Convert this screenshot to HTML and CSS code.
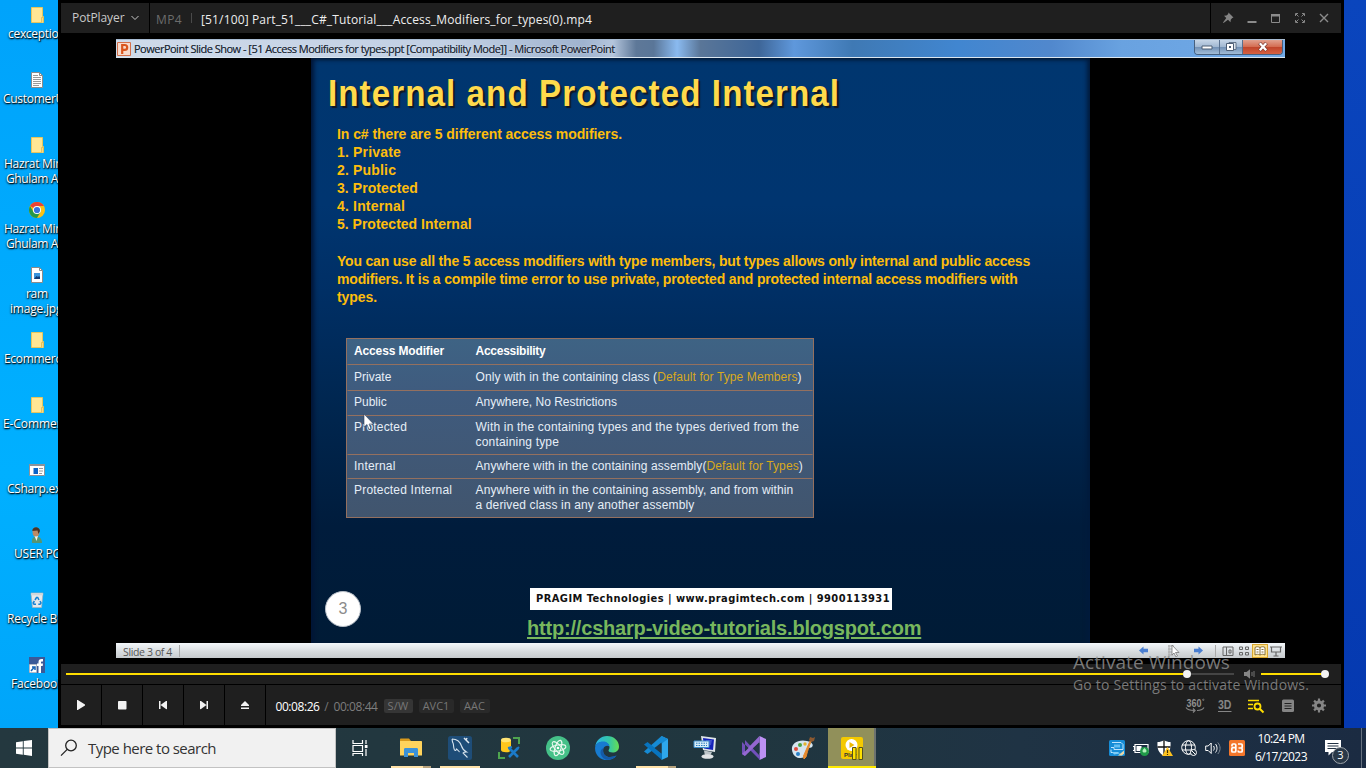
FILE: index.html
```html
<!DOCTYPE html>
<html lang="en">
<head>
<meta charset="utf-8">
<title>PotPlayer</title>
<link rel="stylesheet" href="styles.css">
</head>
<body>
<main class="desktop">
  <aside class="shortcuts">
    <div class="shortcut folder-item"><svg class="sc-icon" viewBox="0 0 16 16"><use href="#folder"/></svg><span class="sc-label l1">cexception</span></div>
    <div class="shortcut"><svg class="sc-icon" viewBox="0 0 16 16"><path d="M2.500.5h8l3 3v12h-11z" fill="#fff" stroke="#8b8b8b"/><path d="M10.500.5v3h3" fill="none" stroke="#8b8b8b"/><path d="M4 3.500h5M4 5.500h8M4 7.500h8M4 9.500h8M4 11.500h8M4 13.500h6" stroke="#9a9a9a"/></svg><span class="sc-label l2">CustomerUI</span></div>
    <div class="shortcut"><svg class="sc-icon" viewBox="0 0 16 16"><use href="#folder"/></svg><span class="sc-label l3">Hazrat Mirza</span><span class="sc-label l4">Ghulam Ah</span></div>
    <div class="shortcut"><svg class="sc-icon" viewBox="0 0 16 16"><circle cx="8" cy="8" r="8" fill="#fbc116"/><path d="M8 8 1.070 4A8 8 0 0 1 14.930 4H8z" fill="#ea4335"/><path d="M1.070 4A8 8 0 0 0 8 16l3.500-6L8 8 4.500 10z" fill="#279847"/><circle cx="8" cy="8" r="4" fill="#fff"/><circle cx="8" cy="8" r="3.100" fill="#3474e0"/></svg><span class="sc-label l3">Hazrat Mirza</span><span class="sc-label l4">Ghulam Ah</span></div>
    <div class="shortcut"><svg class="sc-icon" viewBox="0 0 16 16"><path d="M2.500.5h8l3 3v12h-11z" fill="#fff" stroke="#8b8b8b"/><path d="M10.500.5v3h3" fill="none" stroke="#8b8b8b"/><path d="M5 6h6v6H5z" fill="#3a93dc"/><path d="m5 12 2.500-3 1.500 1 1-1 1 1v2z" fill="#123c75"/></svg><span class="sc-label l5">ram</span><span class="sc-label l6">image.jpg</span></div>
    <div class="shortcut"><svg class="sc-icon" viewBox="0 0 16 16"><use href="#folder"/></svg><span class="sc-label l7">Ecommerce</span></div>
    <div class="shortcut"><svg class="sc-icon" viewBox="0 0 16 16"><use href="#folder"/></svg><span class="sc-label l8">E-Commerce</span></div>
    <div class="shortcut"><svg class="sc-icon" viewBox="0 0 16 16"><path d="M.5 2.500h15v11H.5z" fill="#fff" stroke="#8c9299"/><path d="M0 2h16v2H0z" fill="#8c9299"/><path d="M4.500 6h4.500v6H4.500z" fill="#0a64c8"/><path d="M10 6.500h4M10 9h4M10 11.500h3" stroke="#999"/></svg><span class="sc-label l9">CSharp.exe</span></div>
    <div class="shortcut"><svg class="sc-icon" viewBox="0 0 16 16"><path d="M3 16c-.5-4 1-6.500 4-6.500 4 0 6 2.500 6 6.500z" fill="#569573"/><path d="m5.500 9 2 5 1.500-5z" fill="#f4f4ee"/><ellipse cx="7" cy="5" rx="3.500" ry="4.500" fill="#bb8b66"/><path d="M3.300 4c0-5 7.400-5 7.700 0l-1.500 3-1-3.500z" fill="#4a3426"/></svg><span class="sc-label l10">USER PC</span></div>
    <div class="shortcut"><svg class="sc-icon" viewBox="0 0 16 16"><path d="m2 1 12 0-1.500 14.500h-9z" fill="#e5e9ec" stroke="#a9b2b8" stroke-width=".7"/><path d="M2 1.500h12v1.800H2z" fill="#cfd6db"/><path d="m6 8 1.500-2.500h1.200L10 8M11 9l1 2-1 1.200H9.300M7 12.200H5L4.200 11 5.400 9" fill="none" stroke="#1682d4" stroke-width="1.500"/></svg><span class="sc-label l11">Recycle Bin</span></div>
    <div class="shortcut"><svg class="sc-icon" viewBox="0 0 16 16"><path d="M0 0h16v16H0z" fill="#3b5998"/><path d="M9.500 16V9H8V6.500h1.500V5c0-2 1-3 3-3H14v2.500h-1c-.8 0-1 .3-1 1v1h2L13.700 9H12v7z" fill="#fff"/><path d="M.5 7.500h7v8h-7z" fill="#fff" stroke="#c4c4c4" stroke-width=".6"/><path d="m2 14 3-3.500M3 10h3v3" fill="none" stroke="#1763b6" stroke-width="1.500"/></svg><span class="sc-label l12">Facebook</span></div>
  </aside>

  <section class="player">
    <header class="titlebar">
      <div class="brand"><span class="brand-name">PotPlayer</span><svg width="8" height="6" viewBox="0 0 8 6"><path d="m.5 1 3.500 3.500L7.500 1" fill="none" stroke="#c8c8c8"/></svg></div>
      <div class="now"><span class="fmt">MP4</span><i class="tick"></i><span class="file">[51/100] Part_51___C#_Tutorial___Access_Modifiers_for_types(0).mp4</span></div>
      <div class="winctl">
        <svg viewBox="0 0 12 12"><path d="m6.500.5 5 5-1.300.4-1.500 1.800-.2 2.500-2.500-2.400L1.500 11l-.5-.5 3.300-4.400L2 3.800l2.500-.3 1.700-1.500z" fill="#858585"/></svg>
        <svg viewBox="0 0 12 12"><path d="M1.500 9h9v2h-9z" fill="#8b8b8b"/></svg>
        <svg viewBox="0 0 12 12"><path d="M1.500 2.500h8v8h-8z" fill="none" stroke="#8b8b8b"/><path d="M1 2h9v2.500H1z" fill="#8b8b8b"/></svg>
        <svg viewBox="0 0 12 12"><path d="M4 1.500H1.500V4M8 1.500h2.500V4M4 10.500H1.500V8M8 10.500h2.500V8M2 2l2.500 2.500M10 2 7.500 4.500M2 10l2.500-2.500M10 10 7.500 7.500" fill="none" stroke="#858585"/></svg>
        <svg viewBox="0 0 12 12"><path d="m2 2 8 8M10 2l-8 8" stroke="#8b8b8b" stroke-width="1.400"/></svg>
      </div>
    </header>

    <div class="video">
      <div class="ppt">
        <div class="ppt-bar">
          <svg class="ppt-logo" viewBox="0 0 14 14"><path d="M.5.5h13v13H.5z" fill="#f8dacb" stroke="#d4704a"/><path d="M5.200 12V3h2.500c3.300 0 3.300 4.800 0 4.800H5.200" fill="none" stroke="#d9551d" stroke-width="2.200"/></svg>
          <span class="ppt-title">PowerPoint Slide Show - [51 Access Modifiers for types.ppt [Compatibility Mode]] - Microsoft PowerPoint</span>
          <div class="aero">
            <div class="aero-btn a-min"><svg viewBox="0 0 12 8"><path d="M1 3h10v3H1z" fill="#fff" stroke="#4d5e75"/></svg></div>
            <div class="aero-btn a-max"><svg viewBox="0 0 12 10"><path d="M4 .5h7v7H4z" fill="#dce4ec" stroke="#4d5e75" stroke-width=".8"/><path d="M1.500 1.500h7v7h-7z" fill="#fff" stroke="#4d5e75"/><path d="M4 4h2v2H4z" fill="#4d5e75"/></svg></div>
            <div class="aero-btn a-close"><svg viewBox="0 0 12 10"><path d="m2.500 1 7 7.500M9.500 1l-7 7.500" stroke="#7b3a32" stroke-width="3.600"/><path d="m2.800 1.300 6.400 6.900M9.200 1.300 2.800 8.200" stroke="#fff" stroke-width="2.300"/></svg></div>
          </div>
        </div>

        <div class="slide">
          <h1 class="slide-title">Internal and Protected Internal</h1>
          <div class="body-text">
            <p class="b1">In c# there are 5 different access modifiers.</p>
            <p class="b2">1. Private</p>
            <p class="b2">2. Public</p>
            <p class="b3">3. Protected</p>
            <p class="b2">4. Internal</p>
            <p>5. Protected Internal</p>
            <p class="b4 gap">You can use all the 5 access modifiers with type members, but types allows only internal and public access</p>
            <p class="b5">modifiers. It is a compile time error to use private, protected and protected internal access modifiers with</p>
            <p class="b1">types.</p>
          </div>
          <div class="mods">
            <div class="row r1 head"><span class="h1">Access Modifier</span><span class="h2">Accessibility</span></div>
            <div class="row r2"><span>Private</span><span class="t1">Only with in the containing class (<em>Default for Type Members</em>)</span></div>
            <div class="row r3"><span>Public</span><span>Anywhere, No Restrictions</span></div>
            <div class="row r4"><span class="t2">Protected</span><span class="t2">With in the containing types and the types derived from the<br>containing type</span></div>
            <div class="row r5"><span class="t2">Internal</span><span class="t1">Anywhere with in the containing assembly(<em>Default for Types</em>)</span></div>
            <div class="row r6"><span class="t2">Protected Internal</span><span class="t3">Anywhere with in the containing assembly, and from within<br>a derived class in any another assembly</span></div>
            <svg class="pointer" viewBox="0 0 12 17"><path d="M1 0v13l3-2.500 2 5 2-1-2-4.500h4.500z" fill="#fff" stroke="#31425c" stroke-width=".6"/></svg>
          </div>
          <footer class="slide-foot">
            <div class="page-no">3</div>
            <div class="credits"><div class="company">PRAGIM Technologies | www.pragimtech.com | 9900113931</div><div class="link">http://csharp-video-tutorials.blogspot.com</div></div>
          </footer>
        </div>

        <div class="ppt-status">
          <span class="slide-count">Slide 3 of 4</span><i class="st-sep"></i>
          <div class="st-tools">
            <svg class="arrow-l" width="10" height="9" viewBox="0 0 10 9"><path d="m0 4.500 4.500-4v2.300H9v3.400H4.500v2.300z" fill="#4a7ed0"/></svg>
            <svg class="st-page" width="14" height="12" viewBox="0 0 14 12"><path d="M1 1h6M1 4h4M1 7h4M1 10h5M2 0v12" stroke="#aaa"/><path d="M5 0v10l2-2 2 4 1.500-1-2-3.500H12z" fill="#fff" stroke="#777" stroke-width=".8"/></svg>
            <svg class="arrow-r" width="10" height="9" viewBox="0 0 10 9"><path d="m10 4.500-4.500-4v2.300H1v3.400h4.500v2.300z" fill="#4a7ed0"/></svg>
            <i class="st-sep2"></i>
            <svg class="st-ic" viewBox="0 0 12 12"><path d="M1 2h10v8.500H1zM4.500 2v8.500M7 5h2v3H7z" fill="none" stroke="#666"/></svg>
            <svg class="st-ic" viewBox="0 0 12 12"><path d="M1.500 2h3v2.500h-3zM7.500 2h3v2.500h-3zM1.500 7.500h3V10h-3zM7.500 7.500h3V10h-3z" fill="none" stroke="#666"/></svg>
            <span class="st-hot"><svg class="st-ic" viewBox="0 0 12 12"><path d="M6 2.500c-2-1-3.500-1-5 0V10c1.500-1 3-1 5 0 2-1 3.500-1 5 0V2.500c-1.500-1-3-1-5 0zM6 2.500V10M2.500 4.500h2M2.500 7h2M7.500 4.500h2M7.500 7h2" fill="#fff" stroke="#86703a"/></svg></span>
            <svg class="st-ic" viewBox="0 0 12 12"><path d="M0 2h12M1.500 2v5h9V2M6 7v4M3.500 11h5" fill="none" stroke="#666" stroke-width="1.200"/></svg>
          </div>
        </div>
      </div>
    </div>

    <div class="seek">
      <div class="track"><i class="played"></i><i class="knob"></i><i class="rest"></i></div>
      <svg class="speaker" width="12" height="10" viewBox="0 0 12 10"><path d="M0 3h2.500L6 .3v9.400L2.500 7H0z" fill="#858585"/><path d="M8 3v4M10 2v6" stroke="#777"/></svg>
      <div class="volume"><i class="knob"></i></div>
    </div>

    <div class="controls">
      <div class="btn"><svg viewBox="0 0 10 10"><path d="M1 0c.2-.2.5-.2.800 0l7.200 4.500v1L1.800 10H1z" fill="#f2f2f2"/></svg></div>
      <div class="btn"><svg viewBox="0 0 10 10"><rect x="1" y="1" width="8.500" height="8.500" rx=".8" fill="#f2f2f2"/></svg></div>
      <div class="btn"><svg viewBox="0 0 10 10"><path d="M1 1h1.500v8H1zM9 1v8.300L8 9 2.500 5 8 1z" fill="#f2f2f2"/></svg></div>
      <div class="btn"><svg viewBox="0 0 10 10"><path d="M7.500 1H9v8H7.500zM1 1l1 0 5.500 4L2 9 1 9.300z" fill="#f2f2f2"/></svg></div>
      <div class="btn"><svg viewBox="0 0 10 10"><path d="M5 1 9 5v1H1V5zM1 7.500h8V9H1z" fill="#f2f2f2"/></svg></div>
      <div class="info">
        <span class="time">00:08:26</span><span class="slash">/</span><span class="time total">00:08:44</span>
        <span class="chip sw">S/W</span><span class="chip avc">AVC1</span><span class="chip aac">AAC</span>
        <div class="tools">
          <svg width="20" height="16" viewBox="0 0 20 16"><text class="ic360" x="1.500" y="8.500" textLength="15" lengthAdjust="spacingAndGlyphs">360</text><circle cx="18.300" cy="1.800" r=".7" fill="none" stroke="#909090" stroke-width=".7"/><path d="M1 9.500c2 3 5 3 8 3M19 9.500c-2 3-4 3-7 3M8 10.500l2 2-2 2" fill="none" stroke="#858585" stroke-width="1.200"/></svg>
          <svg width="16" height="16" viewBox="0 0 16 16"><text class="ic3d" x="1" y="10.500" textLength="13.500" lengthAdjust="spacingAndGlyphs">3D</text><path d="M1 13.500h13.500" stroke="#858585"/></svg>
          <svg width="18" height="16" viewBox="0 0 18 16"><path d="M1 2.500h11M1 6.500h5M1 10.500h5" stroke="#ffde00" stroke-width="1.300"/><circle cx="10.500" cy="8.500" r="3" fill="none" stroke="#ffde00" stroke-width="1.800"/><path d="m13 11 3.500 3.500" stroke="#ffde00" stroke-width="2"/></svg>
          <svg width="16" height="16" viewBox="0 0 16 16"><rect x="2" y="1.500" width="12" height="12.500" rx="1.500" fill="#858585"/><path d="M4.500 5.500h7M4.500 8h7M4.500 10.500h7" stroke="#222"/></svg>
          <svg width="16" height="16" viewBox="0 0 16 16"><g fill="none" stroke="#858585"><circle cx="8" cy="7.500" r="3.600" stroke-width="3"/><path d="M8 .5v3M8 11.500v3M1 7.500h3M12 7.500h3M3.100 2.600l2 2M10.900 10.400l2 2M12.900 2.600l-2 2M5.100 10.400l-2 2" stroke-width="2.200"/></g></svg>
        </div>
      </div>
    </div>
  </section>
</main>

<nav class="taskbar">
  <div class="start"><svg width="16" height="16" viewBox="0 0 16 16"><path d="m0 2.200 6.800-1V7.500H0zM7.700 1.100 16 0v7.500H7.700zM0 8.400h6.800v6.300l-6.800-1zM7.700 8.400H16V16l-8.300-1.200z" fill="#fff"/></svg></div>
  <div class="search"><svg width="18" height="18" viewBox="0 0 18 18"><circle cx="11" cy="6.500" r="5.300" fill="none" stroke="#222" stroke-width="1.300"/><path d="m7.200 10.400-6.200 6.200" stroke="#222" stroke-width="1.300"/></svg><span class="search-text">Type here to search</span></div>
  <div class="tasks">
    <div class="task view"><svg width="16" height="16" viewBox="0 0 16 16"><path d="M1 0v3.500h9.500V0M1 16v-2.500h9.500V16M1 5.500h9.500v6H1zM14 0v4M14 9v7" fill="none" stroke="#fff" stroke-width="1.200"/><path d="M12.800 5h2.700v3h-2.700z" fill="#fff"/></svg></div>
    <div class="task open multi"><svg width="24" height="24" viewBox="0 0 24 24"><path d="M1 3.500c0-.6.400-1 1-1h8L12 5H1z" fill="#d99a1c"/><path d="M1 5h21c.6 0 1 .4 1 1v13.500H1z" fill="#ffd35c"/><path d="M5 21v-7.500c0-1 .5-1.500 1.500-1.500h11c1 0 1.500.5 1.500 1.500V21h-4v-4H9v4z" fill="#3c92d8"/></svg></div>
    <div class="task open"><svg width="24" height="24" viewBox="0 0 24 24"><rect width="24" height="24" rx="2.500" fill="#1e4d78"/><path d="M4 3c5 0 8 2.500 9.500 7 .8 3 2.500 4.500 5 6-2 0-3 .3-3.500 1l4.500 4.500M4 3c.5 1.500 0 2.500 1 4 1 2 0 4 1.500 7 .8 1 1.500.5 2-1 1.500 1 2 2 3 3" fill="none" stroke="#d7e4ee" stroke-width="1.100"/><path d="m16 2 2 2 1-2M18 4l3 3" fill="none" stroke="#dfe8ee" stroke-width="1.500"/></svg></div>
    <div class="task"><svg width="24" height="24" viewBox="0 0 24 24"><path d="M16 2h6v6M2 16v6h6" fill="none" stroke="#4fa44f" stroke-width="2"/><path d="M4 4v10c0 3 10 3 10 0V4z" fill="#ffc61c"/><ellipse cx="9" cy="4" rx="5" ry="2.300" fill="#ffe474"/><path d="m12 12 9 9M21 12l-9 9" stroke="#1b7ac9" stroke-width="2.600"/><path d="M11 12l4-1M22 11l-3 3" stroke="#1b7ac9" stroke-width="2"/></svg></div>
    <div class="task"><svg width="24" height="24" viewBox="0 0 24 24"><circle cx="12" cy="12" r="12" fill="#45c088"/><g fill="none" stroke="#e9f8ef" stroke-width="1.100"><ellipse cx="12" cy="12" rx="8" ry="3" transform="rotate(-12 12 12)"/><ellipse cx="12" cy="12" rx="8" ry="3" transform="rotate(48 12 12)"/><ellipse cx="12" cy="12" rx="8" ry="3" transform="rotate(108 12 12)"/></g><circle cx="12" cy="12" r="1.300" fill="#fff"/></svg></div>
    <div class="task"><svg width="24" height="24" viewBox="0 0 24 24"><defs><linearGradient id="eg" x1="0" x2="1"><stop offset="0" stop-color="#2ab4e8"/><stop offset=".6" stop-color="#35c7a4"/><stop offset="1" stop-color="#67df52"/></linearGradient></defs><path d="M.2 11C1 4 6 0 12 0c7 0 12 5 12 10.500 0 4-3 6-6.500 6-2.500 0-4-1-4-2 0-.8 1-1.500 1-3C14.500 8 11 6 8 6 4 6 1 8 .2 11z" fill="url(#eg)"/><path d="M.1 11.500C.7 7.500 4 5.500 8 5.500c3.500 0 6 2 6.400 5-1.500-1.500-5-1-6 2C7 17 10 21 15 21c2.500 0 5-.8 6.500-1.500C19 23 15.500 24 12 24 5 24-.4 18.500.1 11.500z" fill="#177bd0"/><path d="M8.600 12C7 17 10 21 15 21c2.500 0 5-.8 6.500-1.500C19 23 14 24.500 10.500 23.500 4.500 20.500 4 13.500 8.600 12z" fill="#145aa8"/></svg></div>
    <div class="task open multi"><svg width="24" height="24" viewBox="0 0 24 24"><path d="M17.500 0v24L24 21V3z" fill="#2ea8ed"/><path d="M17.500 0 24 3 3.500 18 0 15.500z" fill="#168bd4"/><path d="m0 8.500 3.500-2.500L18 17.500V24z" fill="#0874be"/><path d="M17.500 6.500v11L10.500 12z" fill="#223844"/></svg></div>
    <div class="task"><svg width="24" height="24" viewBox="0 0 24 24"><path d="m8 0 15 2-1 14-12-2z" fill="#dfe5e8"/><path d="m10 2 11 1.500-1 10.500-9-1.500z" fill="#1522b8"/><path d="M13 4h6l-1 5h-5z" fill="#4050cf"/><path d="M1 5h15v6.500H1z" fill="#d9edf8" stroke="#3b8bc9"/><path d="M3 7.200h11M3 9.500h11" stroke="#277cbe" stroke-dasharray="1.500 1"/><path d="m11 14.500 8 1.500-2 4h-5z" fill="#bcc4c8"/><ellipse cx="14.500" cy="20.500" rx="6" ry="2.300" fill="#e0e3e5"/></svg></div>
    <div class="task"><svg width="24" height="24" viewBox="0 0 24 24"><path d="M17.500 0 24 3v18l-6.500 3z" fill="#bd91f4"/><path d="m0 6 3-2 15 16v4zM0 6v12l3 2V4z" fill="#7250ba"/><path d="M3 20 17.500 6V0L0 18z" fill="#9467d1"/><path d="M17.500 7v10l-6-5z" fill="#223844"/><path d="M3 8.500v7L6.500 12z" fill="#223844"/></svg></div>
    <div class="task"><svg width="24" height="24" viewBox="0 0 24 24"><path d="M1 14C0 7 8 3 16 5c5 1 7 4 5 6-2 1.500-5 0-5 3s-1 9-8 8c-4-.5-6.500-4-7-8z" fill="#d5e4ef"/><circle cx="5" cy="13" r="2" fill="#df4b3c"/><circle cx="9" cy="9" r="2" fill="#4aa344"/><circle cx="14" cy="8" r="1.700" fill="#e4b42d"/><circle cx="7" cy="18" r="2" fill="#2981c8"/><path d="M21 3c-2 5-4 10-6 18l-2 2-.5-3L19 5z" fill="#e58a2e" stroke="#e58a2e"/><path d="m18 4 1-3 3 1 2-1-1 4-3 1z" fill="#8c5930"/></svg></div>
    <div class="task current"><svg width="24" height="24" viewBox="0 0 24 24"><rect x="1" y="1" width="22" height="22" rx="2" fill="#f4c900"/><circle cx="11.500" cy="9" r="6" fill="#fff"/><path d="m9.500 6 5 3-5 3z" fill="#eeb900"/><text class="play-word" x="4" y="21">Play</text><path d="M12.500 11.500h3.500v12h-3.500zM19 11.500h3.500v12H19z" fill="#ffe100" stroke="#55501d"/></svg></div>
  </div>
  <div class="tray">
    <svg width="16" height="16" viewBox="0 0 16 16"><rect width="16" height="16" rx="1.500" fill="#168cd6"/><path d="M3 2.500h9l2 2v5H5v-2H2M2 9.500v3h3" fill="none" stroke="#bfe5ff"/><path d="M5 4.500h6v3H5z" fill="#65bff2"/><path d="M3 12h6l2 1.500-6 1z" fill="#7ecbf5"/><path d="m9 15.500 6-5v3l-2 2z" fill="#e8d7a8"/></svg>
    <svg width="16" height="16" viewBox="0 0 16 16"><path d="M2 4.500h13v8H2zM0 6.500h1.500v4H0" fill="none" stroke="#fff" stroke-width="1.200"/><path d="M3.500 6h5v5h-5z" fill="#fff"/><circle cx="11.500" cy="11.500" r="4.500" fill="#209a49"/><path d="M11.500 14v-4M9.500 11c0 2 4 2 4 0 0-1-1-2-2-3-1 1-2 2-2 3z" fill="#b4f0bd"/></svg>
    <svg width="16" height="16" viewBox="0 0 16 16"><path d="M7 0c2 1.500 4 2 6.500 2 .5 7-1 11-6.500 14C1.500 13 0 9 .5 2 3 2 5 1.500 7 0z" fill="#fff"/><path d="M7 0v16M.5 7h13" stroke="#111" stroke-width="1.300"/><path d="m10.500 7 5.500 9H5z" fill="#ffc31f"/><path d="M10.500 10v3M10.500 14v1" stroke="#403000" stroke-width="1.200"/></svg>
    <svg width="16" height="16" viewBox="0 0 16 16"><circle cx="7.500" cy="7.500" r="6.800" fill="none" stroke="#fff"/><ellipse cx="7.500" cy="7.500" rx="3" ry="6.800" fill="none" stroke="#fff"/><path d="M1 5h13M1 10h13" stroke="#fff"/><circle cx="12.500" cy="12.500" r="3" fill="#1f3040" stroke="#fff"/><path d="m10.500 10.500 4 4" stroke="#fff"/></svg>
    <svg width="16" height="16" viewBox="0 0 16 16"><path d="M.7 6h2.500l3-3v10.500l-3-3H.7z" fill="none" stroke="#fff"/><path d="M8.500 6c1 1.500 1 3 0 4.500M10.500 4c2 2.500 2 6 0 8.500" fill="none" stroke="#fff"/><path d="M12.800 2.500c3 3.500 3 8 0 11.500" fill="none" stroke="#7f8a96"/></svg>
    <svg width="16" height="16" viewBox="0 0 16 16"><rect width="16" height="16" rx="1.500" fill="#f3762b"/><g fill="none" stroke="#fff" stroke-width="1.700"><path d="M3 6.500V5c0-.7.400-1 1-1h1.800c.7 0 1 .3 1 1v2.700H4c-.8 0-1.200.4-1.200 1V11c0 .6.400 1 1 1h2c.6 0 1-.4 1-1V8"/><path d="M9 4h3.200c.6 0 1 .4 1 1v2c0 .6-.4 1-1 1H9.500M12.200 8c.6 0 1 .4 1 1v2c0 .6-.4 1-1 1h-2c-.7 0-1-.4-1-1v-.5"/></g></svg>
  </div>
  <div class="clock"><span class="hour">10:24 PM</span><span class="date">6/17/2023</span></div>
  <div class="notes"><svg width="16" height="16" viewBox="0 0 16 16"><path d="M0 0h16v12H7l-3.500 3.500V12H0z" fill="#fff"/><path d="M2.500 3.500h11M2.500 6h11M2.500 8.500h11" stroke="#223244" stroke-width="1.100"/></svg><span class="badge">3</span></div>
</nav>

<div class="watermark"><div class="wm1">Activate Windows</div><div class="wm2">Go to Settings to activate Windows.</div></div>

<svg class="defs"><symbol id="folder" viewBox="0 0 16 16"><path d="M2.500.5h11v9h1v6h-12z" fill="#ffe694" stroke="#e7c65d"/><path d="M12.500 15.500v-5h1.500v5" fill="#fff0b8" stroke="#dfb849" stroke-width=".8"/></symbol></svg>
</body>
</html>
```
FILE: styles.css
```css
* { box-sizing: border-box; }
body { margin: 0; width: 1366px; height: 768px; overflow: hidden; position: relative; background: #000; font-family: "Open Sans", sans-serif; }
p, h1 { margin: 0; }
i { display: block; }
.defs { position: absolute; width: 0; height: 0; }

/* desktop */
.desktop { display: flex; height: 728px; background: linear-gradient(#0a45bd, #0539b0); }
.shortcuts { width: 58px; overflow: hidden; flex: none; padding-top: 7px; background: linear-gradient(#00a3fb, #00b0ff 65%, #00a5fa); }
.shortcut { height: 65px; display: flex; flex-direction: column; }
.sc-icon { width: 16px; height: 16px; margin: 0 0 3px 29px; flex: none; }
.sc-label { font-size: 12px; line-height: 15px; letter-spacing: -.3px; color: #fff; white-space: nowrap; text-shadow: 0 1px 2px #000, 1px 1px 1px rgba(0,0,0,.8); }
.l1 { padding-left: 8px; } .l2 { padding-left: 3px; } .l3 { padding-left: 4px; } .l4 { padding-left: 6px; letter-spacing: -.37px; }
.l5 { padding-left: 26px; } .l6 { padding-left: 10px; letter-spacing: -.2px; } .l7 { padding-left: 4px; } .l8 { padding-left: 3px; letter-spacing: -.1px; }
.l9 { padding-left: 7px; } .l10 { padding-left: 14px; letter-spacing: -.2px; } .l11 { padding-left: 7px; letter-spacing: -.24px; } .l12 { padding-left: 11px; letter-spacing: -.15px; }

/* player */
.player { width: 1286px; flex: none; background: #000; padding: 3px 3px 0; display: flex; flex-direction: column; }
.titlebar { height: 30px; display: flex; gap: 1px; }
.brand, .now, .winctl { background: #1f1f1f; display: flex; align-items: center; }
.brand { width: 88px; padding: 0 0 1px 11px; gap: 7px; }
.brand-name { font-size: 12px; letter-spacing: -.09px; color: #c9c9c9; }
.now { flex: 1; padding: 3px 0 0 6px; font-size: 12px; }
.fmt { color: #6c6c6c; letter-spacing: .38px; width: 27px; }
.tick { width: 1px; height: 10px; background: #4a4a4a; margin: 0 9px 3px 8px; }
.file { color: #eee; letter-spacing: .145px; white-space: nowrap; }
.winctl { width: 130px; padding-left: 11px; gap: 12px; }
.winctl svg { width: 12px; height: 12px; }
.video { height: 631px; padding: 6px 0 0 55px; }
.ppt { width: 1169px; height: 619px; display: flex; flex-direction: column; }
.ppt-bar { height: 19px; border-top: 1px solid #a8bcd2; border-bottom: 1px solid #dbe6ef; display: flex; align-items: center; padding-left: 1px; background: linear-gradient(90deg, #cfdbea 0, #c1cfe3 29%, #9fb3cf 40%, #b4c5dc 42.500%, #5e7898 44.500%, #5a7698 46%, #8abaf0 48%, #5a7698 50%, #3e6698 55%, #5f98dc 58%, #3f79b4 63%, #4186d0 72%, #5188cd 80%, #69a2e0 86%, #71aae8 100%); }
.ppt-logo { width: 14px; height: 14px; margin-right: 3px; }
.ppt-title { font-size: 11px; letter-spacing: -.506px; line-height: 15px; padding-bottom: 1px; color: #1d2835; white-space: nowrap; flex: 1; text-shadow: 0 0 2px #dce8f6, 0 0 .5px #1d2835; }
.aero { display: flex; align-self: flex-start; margin-right: 2px; border: 1px solid #46607f; border-top: 0; border-radius: 0 0 4px 4px; overflow: hidden; }
.aero-btn { height: 14px; display: flex; align-items: center; justify-content: center; background: linear-gradient(#c6d6e7, #a1b8d2 48%, #7391b5 52%, #a2bdd8); border-left: 1px solid #58708f; }
.aero-btn svg { width: 12px; height: 10px; }
.a-min { width: 24px; border-left: 0; } .a-max { width: 23px; }
.a-close { width: 40px; background: linear-gradient(#e1a18f, #d46d52 48%, #c0452b 52%, #d66142); }
.slide { width: 779px; height: 585px; margin-left: 195px; padding-top: 16px; box-shadow: inset 5px 0 4px -2px #001536, inset -5px 0 4px -2px #001b3d, inset 0 5px 4px -3px #001b38; background: linear-gradient(#00366f 0, #003570 25%, #002f65 40%, #00264f 60%, #001c3c 80%, #001b36 100%); display: flex; flex-direction: column; }
.slide-title { font: 700 36px/40px "Liberation Sans", sans-serif; letter-spacing: 1.180px; transform: scaleX(.92); transform-origin: 0 0; color: #ffda4c; margin-left: 17px; text-shadow: 2px 2px 1px #101722; white-space: nowrap; }
.body-text { margin: 10.500px 0 0 26px; font: 700 14px/18.150px "Liberation Sans", sans-serif; color: #fdbd0c; white-space: nowrap; }
.b1 { letter-spacing: -.064px; } .b2 { letter-spacing: .17px; } .b3 { letter-spacing: .07px; } .b4 { letter-spacing: -.198px; } .b5 { letter-spacing: -.175px; }
.gap { margin-top: 18.500px; }
.mods { width: 468px; margin: 31.500px 0 0 34.500px; border: 1.500px solid #94705f; background: linear-gradient(#3e6384, #3f5b7e 30%, #41556e); font: 12px/15.500px "Liberation Sans", sans-serif; color: #e6eef7; position: relative; height: 180px; flex: none; white-space: nowrap; }
.row { display: grid; grid-template-columns: 121.500px 1fr; padding-left: 7.500px; box-shadow: 0 1.500px 0 -.5px #94705f; align-content: start; }
.row em { font-style: normal; color: #d9a91c; }
.r1 { height: 25.500px; padding-top: 5px; } .r2 { height: 26px; padding-top: 5.500px; } .r3 { height: 24.500px; padding-top: 5px; } .r4 { height: 39.500px; padding-top: 5px; } .r5 { height: 24px; padding-top: 4.500px; } .r6 { padding-top: 4.500px; box-shadow: none; }
.head { font-weight: 700; color: #fff; }
.h1 { letter-spacing: -.136px; } .h2 { letter-spacing: -.259px; }
.t1 { letter-spacing: .103px; } .t2 { letter-spacing: .192px; } .t3 { letter-spacing: .14px; }
.pointer { position: absolute; left: 16px; top: 75px; width: 12px; height: 17px; }
.slide-foot { display: flex; margin: auto 0 3px 14px; }
.page-no { width: 36px; height: 36px; margin-top: 3px; border-radius: 50%; background: #fff; border: 1px solid #b9c0c9; color: #8b8b8b; font: 16px/34px "Liberation Sans", sans-serif; text-align: center; }
.credits { margin-left: 166px; }
.company { width: 362px; height: 22px; margin-left: 3px; background: #fff; color: #111; padding-left: 6px; font: 700 11px/22px "DejaVu Sans Condensed", "DejaVu Sans", sans-serif; letter-spacing: .443px; white-space: nowrap; }
.link { width: 394px; margin-top: 6px; font: 700 20px/24px "Liberation Sans", sans-serif; letter-spacing: -.19px; color: #78b75d; text-decoration: underline; text-underline-offset: 2px; text-decoration-thickness: 1.500px; white-space: nowrap; }
.ppt-status { height: 15px; background: linear-gradient(#f3f7fa, #d9dde0 55%, #c7cbce); display: flex; align-items: center; padding-left: 7px; }
.slide-count { font-size: 10.500px; letter-spacing: -.37px; line-height: 14px; color: #555; padding-top: 2px; white-space: nowrap; }
.st-sep { width: 1px; height: 12px; background: #aaa; margin-left: 7px; }
.st-tools { margin-left: auto; display: flex; align-items: center; padding-right: 1px; }
.st-page { margin-left: 18px; }
.arrow-r { margin-left: 12px; }
.st-sep2 { width: 1px; height: 12px; background: #aaa; margin: 0 4px 0 12px; }
.st-ic { width: 12px; height: 12px; margin: 0 2px; flex: none; display: block; }
.st-hot { background: #ffe28a; border: 1px solid #d9a72e; height: 14px; width: 16px; display: flex; align-items: center; justify-content: center; }

.seek { height: 20px; margin-bottom: 1px; background: #1f1f1f; display: flex; align-items: center; padding-left: 5px; }
.track { width: 1168px; display: flex; align-items: center; }
.played { width: 1117px; height: 2px; background: #ffde00; }
.knob { width: 8px; height: 8px; border-radius: 50%; background: #f3f3f3; }
.rest { flex: 1; height: 2px; background: #454545; }
.speaker { margin-left: 10px; }
.volume { width: 68px; margin-left: 5px; display: flex; justify-content: flex-end; background: linear-gradient(#ffde00, #ffde00) 0 3px / 64px 2px no-repeat; }
.controls { height: 40px; display: flex; gap: 1px; }
.btn { width: 40px; background: #1f1f1f; display: flex; align-items: center; justify-content: center; }
.btn svg { width: 10px; height: 10px; }
.info { flex: 1; background: #1f1f1f; display: flex; align-items: center; padding: 2px 14px 0 9.500px; }
.time { font-size: 12px; letter-spacing: -.434px; color: #fff; width: 44px; white-space: nowrap; }
.slash { font-size: 12px; color: #777; width: 14px; text-align: center; }
.total { color: #7d7d7d; }
.chip { height: 14px; border-radius: 2px; background: #292929; color: #777; font-size: 11px; line-height: 14px; text-align: center; }
.sw { width: 29px; margin-left: 6px; background: #353535; letter-spacing: .26px; } .avc { width: 35px; margin-left: 6px; } .aac { width: 30px; margin-left: 6px; }
.tools { margin-left: auto; display: flex; align-items: center; gap: 15px; }
.tools svg:first-child { margin-right: -3px; }
.tools svg:nth-child(2) { margin-right: -1px; }
.ic360 { font: 700 10px "Liberation Sans", sans-serif; fill: #909090; }
.ic3d { font: 700 12.500px "Liberation Sans", sans-serif; fill: #858585; }

/* taskbar */
.taskbar { height: 40px; display: flex; background: linear-gradient(90deg, #24383f, #20363f 55%, #1f3344 75%, #1b2b42); border-right: 4px solid #1b2b42; color: #fff; }
.start { width: 48px; display: flex; align-items: center; justify-content: center; }
.search { width: 288px; background: #f1f1f1; border: 1px solid #c2c2c2; display: flex; align-items: center; padding: 0 0 0 11px; gap: 10px; }
.search-text { color: #333; font-size: 15px; letter-spacing: -.528px; }
.tasks { display: flex; gap: 1px; }
.task { width: 48px; display: flex; align-items: center; justify-content: center; }
.view { margin-right: 2px; }
.open { background: linear-gradient(#ffe2a8, #ffe2a8) 4px 38px / 40px 2px no-repeat; }
.multi { background: linear-gradient(#b7a37e, #b7a37e) 36px 38px / 8px 2px no-repeat, linear-gradient(#ffe2a8, #ffe2a8) 4px 38px / 32px 2px no-repeat; }
.current { background: #91905a; border-bottom: 2px solid #ffea00; box-shadow: inset -2px 0 #6c7270; padding-top: 2px; }
.play-word { font: 700 6px "Liberation Sans", sans-serif; fill: #333; }
.tray { margin-left: auto; display: flex; align-items: center; gap: 8px; }
.clock { width: 72px; display: flex; flex-direction: column; align-items: center; justify-content: center; font-size: 12px; line-height: 18px; white-space: nowrap; }
.hour { letter-spacing: -.591px; } .date { letter-spacing: -.537px; }
.notes { width: 45px; border-right: 1px solid #66717f; position: relative; padding: 11px 0 0 8px; }
.badge { position: absolute; left: 15px; top: 19px; width: 17px; height: 17px; border: 1px solid #9ea4aa; border-radius: 50%; background: #293848; font-size: 11px; line-height: 14px; text-align: center; }

.watermark { position: absolute; left: 1073px; top: 650px; color: rgba(140,140,140,.85); white-space: nowrap; }
.wm1 { font-size: 19px; line-height: 25px; letter-spacing: .06px; }
.wm2 { font-size: 14px; line-height: 20px; letter-spacing: .189px; }
```
